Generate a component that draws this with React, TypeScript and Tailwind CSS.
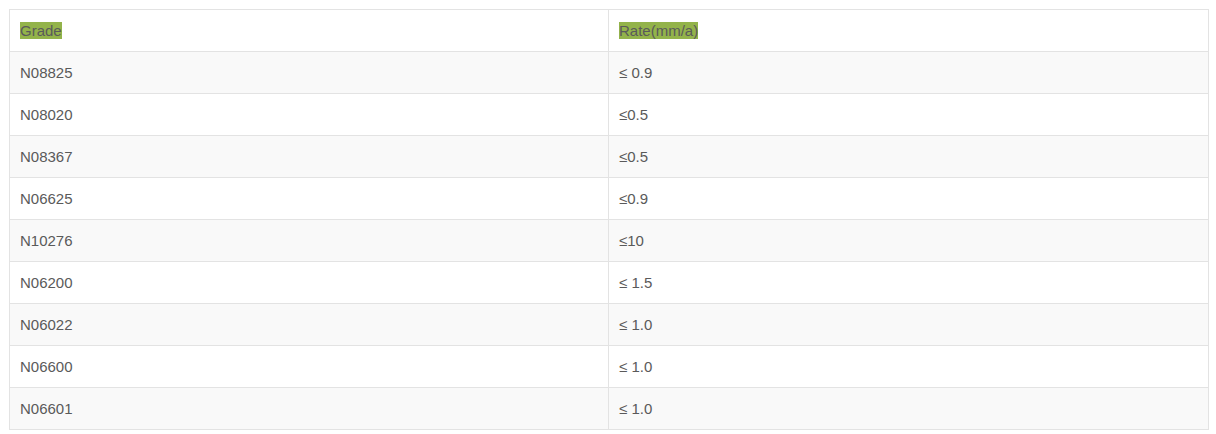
const rows: [string, string][] = [
  ['N08825', '≤ 0.9'],
  ['N08020', '≤0.5'],
  ['N08367', '≤0.5'],
  ['N06625', '≤0.9'],
  ['N10276', '≤10'],
  ['N06200', '≤ 1.5'],
  ['N06022', '≤ 1.0'],
  ['N06600', '≤ 1.0'],
  ['N06601', '≤ 1.0'],
];

export default function App() {
  return (
    <div className="min-h-[434px] bg-white pl-[9px] pt-[9px] font-['Liberation_Sans',Arial,sans-serif] text-[15px] text-[#5a5a5a]">
      <table className="w-[1200px] border-collapse border border-[#e3e3e3]">
        <tbody>
          <tr className="h-[42px]">
            <td className="w-[599px] border border-[#e3e3e3] px-[10px] pt-[1px] align-middle">
              <span className="bg-[#93b34a] leading-[17px] inline-block">Grade</span>
            </td>
            <td className="border border-[#e3e3e3] px-[10px] pt-[1px] align-middle">
              <span className="bg-[#93b34a] leading-[17px] inline-block">Rate(mm/a)</span>
            </td>
          </tr>
          {rows.map(([grade, rate], i) => (
            <tr key={grade} className={i % 2 === 0 ? 'h-[42px] bg-[#f9f9f9]' : 'h-[42px] bg-white'}>
              <td className="border border-[#e3e3e3] px-[10px] pt-[1px] align-middle">{grade}</td>
              <td className="border border-[#e3e3e3] px-[10px] pt-[1px] align-middle">{rate}</td>
            </tr>
          ))}
        </tbody>
      </table>
    </div>
  );
}
